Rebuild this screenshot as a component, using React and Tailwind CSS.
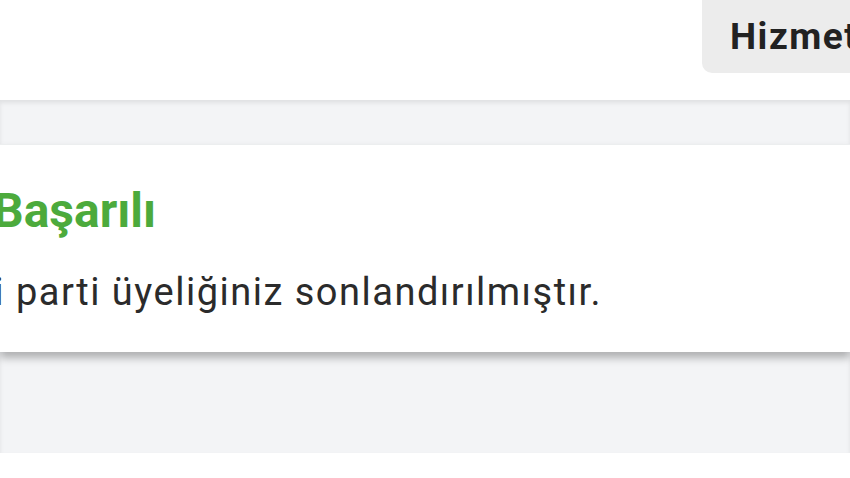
export default function App() {
  return (
    <div className="w-[850px] h-[478px] overflow-hidden bg-white font-['Roboto',sans-serif]">
      {/* Header */}
      <div className="h-[100px] flex justify-end items-start">
        <button className="w-[148px] h-[73px] bg-[#ececec] rounded-bl-[10px] pl-[28px] text-left text-[37px] leading-[42px] tracking-[1.5px] font-bold text-[#222] whitespace-nowrap overflow-hidden">
          Hizmetler
        </button>
      </div>

      {/* Content */}
      <div className="h-[353px] bg-[#f3f4f6] pt-[44px] shadow-[inset_0_3px_4px_rgba(0,0,0,0.08)]">
        <div className="h-[208px] bg-white pt-[41px] overflow-hidden shadow-[0_6px_8px_rgba(0,0,0,0.28)] border-t border-[#eceeef]">
          <h2 className="-ml-[7px] text-[48px] leading-[50px] font-bold text-[#4caa3c] whitespace-nowrap">
            Başarılı
          </h2>
          <p className="-ml-[103px] mt-[34px] text-[38px] leading-[44px] tracking-[1.5px] text-[#2b2b2b] whitespace-nowrap">
            Siyasi parti üyeliğiniz sonlandırılmıştır.
          </p>
        </div>
      </div>
    </div>
  );
}
